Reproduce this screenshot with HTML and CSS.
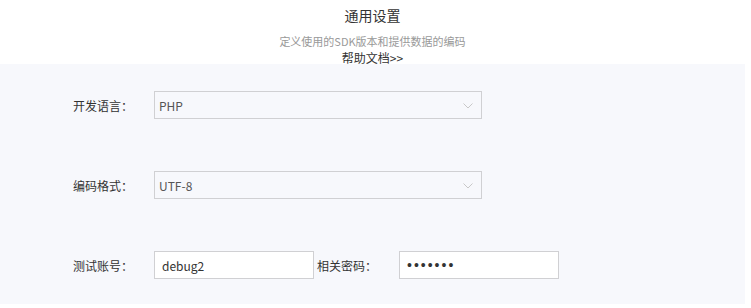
FILE: index.html
```html
<!DOCTYPE html>
<html lang="zh-CN">
<head>
  <meta charset="UTF-8" />
  <title>通用设置</title>
  <link rel="stylesheet" href="styles.css">
</head>
<body>
  <div class="page">
    <div class="header">
      <h2>通用设置</h2>
      <p class="desc">定义使用的SDK版本和提供数据的编码</p>
      <a href="#" class="help">帮助文档&gt;&gt;</a>
    </div>

    <div class="panel">
      <div class="form-row">
        <label>开发语言：</label>
        <div class="select-wrap">
          <select>
            <option>PHP</option>
            <option>Java</option>
            <option>Python</option>
          </select>
          <svg class="arrow" width="10" height="6" viewBox="0 0 10 6"><path d="M0.5 0.5 L5 5 L9.5 0.5" fill="none" stroke="#c8c8c8" stroke-width="1"/></svg>
        </div>
      </div>

      <div class="form-row">
        <label>编码格式：</label>
        <div class="select-wrap">
          <select>
            <option>UTF-8</option>
            <option>GBK</option>
          </select>
          <svg class="arrow" width="10" height="6" viewBox="0 0 10 6"><path d="M0.5 0.5 L5 5 L9.5 0.5" fill="none" stroke="#c8c8c8" stroke-width="1"/></svg>
        </div>
      </div>

      <div class="form-row">
        <label>测试账号：</label>
        <input type="text" class="text-input" value="debug2" />
        <label class="label-inline">相关密码：</label>
        <input type="password" class="text-input pwd" value="1234567" />
      </div>
    </div>
  </div>
</body>
</html>
```

FILE: styles.css
```css
* {
  margin: 0;
  padding: 0;
  box-sizing: border-box;
}

body {
  font-family: "Noto Sans CJK SC", "Noto Sans", sans-serif;
  font-size: 12px;
  color: #333;
  background-color: #fff;
}

.page {
  width: 745px;
}

.header {
  text-align: center;
  height: 64px;
  padding-top: 5px;
}

.header h2 {
  font-size: 14px;
  font-weight: normal;
  color: #333;
  line-height: 20px;
}

.header .desc {
  color: #999;
  font-size: 11px;
  line-height: 16px;
  margin-top: 8px;
}

.header .help {
  color: #333;
  text-decoration: none;
  line-height: 16px;
  display: inline-block;
}

.panel {
  background-color: #f7f8fc;
  padding: 27px 0 25px 73px;
}

.form-row {
  display: flex;
  align-items: center;
  height: 28px;
  margin-bottom: 52px;
}

.form-row:last-child {
  margin-bottom: 0;
}

.form-row label {
  width: 81px;
  color: #333;
}

.form-row .label-inline {
  width: 82px;
  margin-left: 3px;
}

.select-wrap {
  position: relative;
  width: 328px;
  height: 28px;
}

.select-wrap select {
  appearance: none;
  -webkit-appearance: none;
  width: 100%;
  height: 100%;
  border: 1px solid #d0d0d3;
  background: transparent;
  padding-left: 4px;
  font-family: inherit;
  font-size: 12px;
  color: #555;
  outline: none;
}

.select-wrap .arrow {
  position: absolute;
  right: 9px;
  top: 12px;
  pointer-events: none;
}

.text-input {
  width: 160px;
  height: 28px;
  border: 1px solid #d0d0d3;
  background-color: #fff;
  padding-left: 7px;
  font-family: inherit;
  font-size: 12px;
  color: #333;
  outline: none;
}

.text-input.pwd {
  font-family: "Liberation Sans", sans-serif;
  font-size: 14px;
  color: #333;
  letter-spacing: 2px;
}
```
